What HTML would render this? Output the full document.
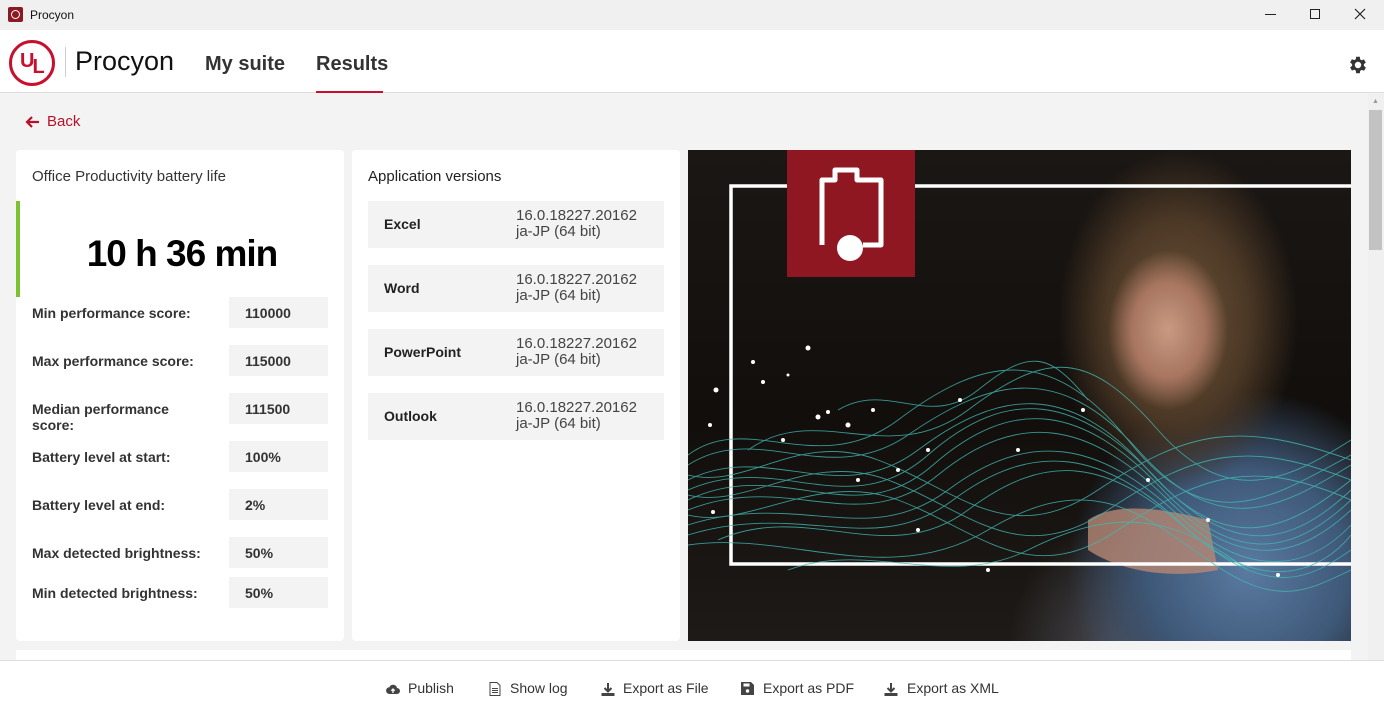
<!DOCTYPE html>
<html><head><meta charset="utf-8"><style>
*{margin:0;padding:0;box-sizing:border-box}
body{width:1384px;height:716px;overflow:hidden;background:#f3f3f3;font-family:"Liberation Sans",sans-serif;position:relative;color:#333}
.a{position:absolute}
.tb{left:0;top:0;width:1384px;height:30px;background:#f0f0f0}
.hd{left:0;top:30px;width:1384px;height:63px;background:#fff;border-bottom:1px solid #dcdcdc}
.card{background:#fff;border-radius:4px}
.lbl{font-size:14px;font-weight:bold;color:#333;left:32px}
.val{left:229px;width:99px;height:31px;background:#f3f3f3;font-size:14px;font-weight:bold;color:#333;padding:8px 0 0 16px}
.app{left:368px;width:296px;height:47px;background:#f3f3f3}
.app b{position:absolute;left:16px;top:15px;font-size:14px;color:#222}
.app span{position:absolute;left:148px;top:7px;font-size:15px;line-height:16px;color:#444}
.bb{left:0;top:660px;width:1384px;height:56px;background:#fff;border-top:1px solid #ddd}
.btn{top:680px;font-size:14px;color:#333}
.btn svg{position:absolute;left:0;top:2px}
.btn span{position:absolute;white-space:nowrap}
</style></head><body>
<div class="a tb"></div>
<div class="a" style="left:8px;top:7px;width:15px;height:15px;background:#8b1a24;border-radius:2px"><div style="position:absolute;left:3px;top:3px;width:9px;height:9px;border:1.5px solid #fff;border-radius:50%"></div></div>
<div class="a" style="left:30px;top:8px;font-size:12px;color:#111">Procyon</div>
<div class="a" style="left:1265px;top:14px;width:11px;height:1px;background:#222"></div>
<div class="a" style="left:1310px;top:9px;width:10px;height:10px;border:1px solid #222"></div>
<svg class="a" style="left:1354px;top:8px" width="12" height="12"><path d="M1 1L11 11M11 1L1 11" stroke="#222" stroke-width="1.2"/></svg>
<div class="a hd"></div>
<div class="a" style="left:9px;top:40px;width:46px;height:46px;border:3px solid #c8102e;border-radius:50%"></div>
<div class="a" style="left:20px;top:50px;font-size:20px;font-weight:bold;color:#c8102e;letter-spacing:-2px">U<span style="position:relative;top:6px">L</span></div>
<div class="a" style="left:65px;top:47px;width:1px;height:30px;background:#ccc"></div>
<div class="a" style="left:75px;top:46px;font-size:27px;color:#111">Procyon</div>
<div class="a" style="left:205px;top:53px;font-size:20px;font-weight:bold;color:#333">My suite</div>
<div class="a" style="left:316px;top:53px;font-size:20px;font-weight:bold;color:#333">Results</div>
<div class="a" style="left:316px;top:91px;width:67px;height:2px;background:#c8102e"></div>
<svg class="a" style="left:1347px;top:54px" width="22" height="22" viewBox="0 0 24 24"><path fill="#333" d="M19.4 13a7.5 7.5 0 000-2l2.1-1.6-2-3.5-2.5 1a7.3 7.3 0 00-1.7-1L15 3h-4l-.4 2.7a7.3 7.3 0 00-1.7 1l-2.5-1-2 3.5L6.6 11a7.5 7.5 0 000 2l-2.2 1.6 2 3.5 2.5-1a7.3 7.3 0 001.7 1L11 21h4l.4-2.7a7.3 7.3 0 001.7-1l2.5 1 2-3.5zM13 15.5a3.5 3.5 0 110-7 3.5 3.5 0 010 7z" transform="translate(-1 0)"/></svg>
<svg class="a" style="left:24px;top:115px" width="16" height="14"><path d="M15 7H3M8 2L3 7l5 5" fill="none" stroke="#b3122a" stroke-width="2.2"/></svg>
<div class="a" style="left:47px;top:113px;font-size:15px;color:#b3122a">Back</div>
<div class="a" style="left:1368px;top:94px;width:16px;height:566px;background:#f0f0f0"></div>
<div class="a" style="left:1369px;top:110px;width:13px;height:140px;background:#c2c2c2"></div>
<div class="a" style="left:1372px;top:98px;font-size:7px;color:#999">▲</div>

<div class="a card" style="left:16px;top:150px;width:328px;height:491px"></div>
<div class="a" style="left:32px;top:168px;font-size:15px;color:#333">Office Productivity battery life</div>
<div class="a" style="left:16px;top:201px;width:4px;height:96px;background:#7ac231"></div>
<div class="a" style="left:20px;top:233px;width:324px;text-align:center;font-size:37px;font-weight:bold;color:#000;letter-spacing:-1px">10 h 36 min</div>
<div class="a lbl" style="top:305px">Min performance score:</div><div class="a val" style="top:297px">110000</div>
<div class="a lbl" style="top:353px">Max performance score:</div><div class="a val" style="top:345px">115000</div>
<div class="a lbl" style="top:401px;line-height:16px">Median performance<br>score:</div><div class="a val" style="top:393px">111500</div>
<div class="a lbl" style="top:449px">Battery level at start:</div><div class="a val" style="top:441px">100%</div>
<div class="a lbl" style="top:497px">Battery level at end:</div><div class="a val" style="top:489px">2%</div>
<div class="a lbl" style="top:545px">Max detected brightness:</div><div class="a val" style="top:537px">50%</div>
<div class="a lbl" style="top:585px">Min detected brightness:</div><div class="a val" style="top:577px">50%</div>

<div class="a card" style="left:352px;top:150px;width:328px;height:491px"></div>
<div class="a" style="left:368px;top:168px;font-size:15px;color:#222">Application versions</div>
<div class="a app" style="top:201px"><b>Excel</b><span>16.0.18227.20162<br>ja-JP (64 bit)</span></div>
<div class="a app" style="top:265px"><b>Word</b><span>16.0.18227.20162<br>ja-JP (64 bit)</span></div>
<div class="a app" style="top:329px"><b>PowerPoint</b><span>16.0.18227.20162<br>ja-JP (64 bit)</span></div>
<div class="a app" style="top:393px"><b>Outlook</b><span>16.0.18227.20162<br>ja-JP (64 bit)</span></div>

<div class="a" style="left:688px;top:150px;width:663px;height:491px;overflow:hidden;background:
radial-gradient(ellipse 60px 80px at 480px 180px,#c99a82 0%,#a77560 60%,transparent 100%),
radial-gradient(ellipse 120px 170px at 490px 170px,#6e5538 0%,#4a3725 60%,transparent 100%),
radial-gradient(ellipse 200px 200px at 560px 420px,#5a7aa0 0%,#3e5878 50%,transparent 90%),
radial-gradient(ellipse 110px 130px at 430px 500px,#4a4a52 0%,transparent 100%),
linear-gradient(180deg,#1b1714,#110e0c 55%,#1e1a17)">
<svg width="663" height="491" style="position:absolute;left:0;top:0">
<path d="M400 370 C430 350 480 360 520 370 L530 420 C480 430 430 420 400 400Z" fill="#b78773" opacity=".8"/>
<rect x="43" y="36" width="640" height="378" fill="none" stroke="#fff" stroke-width="3.5"/>
<g fill="none" stroke="#43b9b2" stroke-width="0.9" opacity=".8">
<path d="M0 330 C80 290 150 360 230 300 S380 230 460 320 S600 380 663 330"/>
<path d="M0 340 C90 300 160 375 240 305 S390 245 470 330 S610 390 663 340"/>
<path d="M0 350 C95 305 165 385 245 315 S395 255 475 340 S615 395 663 350"/>
<path d="M0 360 C100 320 170 390 250 325 S400 270 480 350 S620 400 663 360"/>
<path d="M0 315 C70 270 140 340 220 285 S370 210 450 300 S590 360 663 315"/>
<path d="M0 305 C60 260 130 330 210 270 S360 190 440 290 S580 350 663 305"/>
<path d="M0 375 C110 340 180 400 260 340 S410 290 490 365 S630 410 663 375"/>
<path d="M0 385 C115 350 185 410 265 350 S415 300 495 375 S635 420 663 385"/>
<path d="M30 390 C120 350 200 420 280 360 S420 310 500 380 S620 430 663 400"/>
<path d="M60 300 C130 250 200 320 280 260 S400 200 470 280 S600 330 663 290"/>
<path d="M0 395 C100 380 200 440 300 380 S450 360 520 410 S620 440 663 420"/>
<path d="M0 345 C60 360 120 300 200 330 S330 420 420 360 S560 290 663 330"/>
<path d="M0 365 C60 380 130 320 210 350 S340 440 430 380 S570 310 663 350"/>
<path d="M0 325 C60 340 110 280 190 310 S320 400 410 340 S550 270 663 310"/>
<path d="M100 420 C180 390 260 440 340 400 S480 360 560 420"/>
<path d="M150 260 C200 230 240 280 290 240 S360 200 400 250"/>
</g>
<g fill="#fff">
<circle cx="28" cy="240" r="2.5"/><circle cx="65" cy="212" r="2"/><circle cx="75" cy="232" r="2"/><circle cx="120" cy="198" r="2.5"/><circle cx="100" cy="225" r="1.5"/><circle cx="130" cy="267" r="2.5"/><circle cx="140" cy="262" r="2"/><circle cx="95" cy="290" r="2"/><circle cx="22" cy="275" r="2"/><circle cx="160" cy="275" r="2.5"/><circle cx="185" cy="260" r="2"/><circle cx="240" cy="300" r="2"/><circle cx="210" cy="320" r="2"/><circle cx="170" cy="330" r="2"/><circle cx="230" cy="380" r="2"/><circle cx="300" cy="420" r="2"/><circle cx="330" cy="300" r="2"/><circle cx="395" cy="260" r="2"/><circle cx="460" cy="330" r="2"/><circle cx="520" cy="370" r="2"/><circle cx="590" cy="425" r="2"/><circle cx="25" cy="362" r="2"/><circle cx="272" cy="250" r="2"/>
</g>
</svg>
<div style="position:absolute;left:99px;top:0;width:128px;height:127px;background:#8f1722"></div>
<svg width="128" height="127" style="position:absolute;left:99px;top:0"><path d="M35 95 V30 H48 V20 H70 V30 H94 V95 H76" fill="none" stroke="#fff" stroke-width="5" stroke-linejoin="round"/><circle cx="63" cy="98" r="13" fill="#fff"/></svg>
</div>

<div class="a" style="left:16px;top:650px;width:1335px;height:12px;background:#fff"></div>
<div class="a bb"></div>
<div class="a btn" style="left:386px"><svg width="14" height="14" viewBox="0 0 14 14"><path d="M3.5 12h7.5a3 3 0 000-6 4 4 0 00-7.6-.8A3.3 3.3 0 003.5 12z" fill="#444"/><path d="M7 11V7M5.3 8.7L7 7l1.7 1.7" stroke="#fff" stroke-width="1.3" fill="none"/></svg><span style="left:22px">Publish</span></div>
<div class="a btn" style="left:489px"><svg width="12" height="14"><path d="M1 .5h7l3 3v10H1z" fill="none" stroke="#444"/><path d="M3 6.5h6M3 8.5h6M3 10.5h6" stroke="#444"/></svg><span style="left:21px">Show log</span></div>
<div class="a btn" style="left:601px"><svg width="14" height="14"><path d="M7 1v8M3.5 6L7 9.5 10.5 6" stroke="#444" stroke-width="2" fill="none"/><path d="M0.5 11h13v3H0.5z" fill="#444"/></svg><span style="left:22px">Export as File</span></div>
<div class="a btn" style="left:741px"><svg width="13" height="13"><path d="M0 0h10l3 3v10H0z" fill="#444"/><rect x="2.5" y="1.5" width="6" height="3" fill="#fff"/><circle cx="6.5" cy="9" r="1.7" fill="#fff"/></svg><span style="left:22px">Export as PDF</span></div>
<div class="a btn" style="left:884px"><svg width="14" height="14"><path d="M7 1v8M3.5 6L7 9.5 10.5 6" stroke="#444" stroke-width="2" fill="none"/><path d="M0.5 11h13v3H0.5z" fill="#444"/></svg><span style="left:23px">Export as XML</span></div>
</body></html>
